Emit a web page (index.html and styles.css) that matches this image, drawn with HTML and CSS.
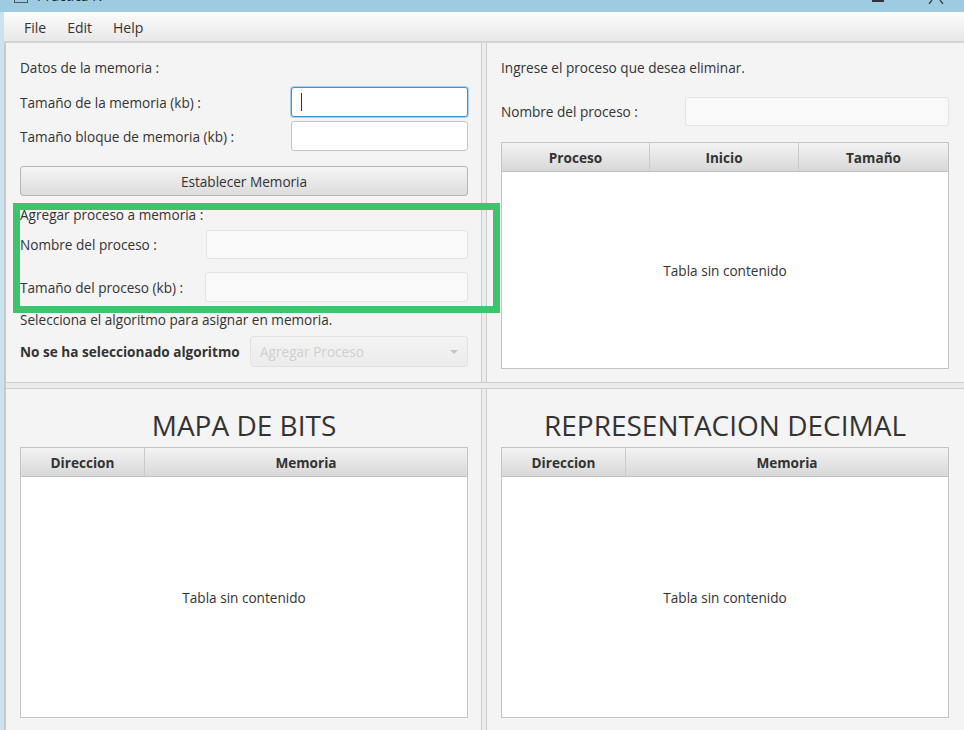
FILE: index.html
```html
<!DOCTYPE html>
<html lang="es">
<head>
<meta charset="utf-8">
<title>Practica</title>
<link rel="stylesheet" href="styles.css">
</head>
<body>
<div class="screen">
  <header class="titlebar">
    <span class="tb-icon"></span>
    <span class="tb-title">Practica IV</span>
    <span class="tb-fill"></span>
    <span class="tb-min"></span>
    <svg class="tb-close" width="16" height="4" viewBox="0 0 16 4"><path d="M4 0 L1 4 M12 0 L15 4" stroke="#444" stroke-width="1.4" fill="none"/></svg>
  </header>
  <div class="frame">
    <div class="edge"></div>
    <div class="win">
      <nav class="menubar">
        <span class="menu">File</span>
        <span class="menu">Edit</span>
        <span class="menu">Help</span>
      </nav>
      <main class="content">
        <div class="row row-top">
          <section class="panel panel-left panel-tl">
            <div class="line">Datos de la memoria :</div>
            <div class="frow r1">
              <span class="lbl">Tamaño de la memoria (kb) :</span>
              <div class="field focused w177"><span class="caret"></span></div>
            </div>
            <div class="frow r2">
              <span class="lbl">Tamaño bloque de memoria (kb) :</span>
              <div class="field w177"></div>
            </div>
            <div class="btn">Establecer Memoria</div>
            <div class="line l-agregar">Agregar proceso a memoria :</div>
            <div class="frow r3">
              <span class="lbl">Nombre del proceso :</span>
              <div class="field disabled w262"></div>
            </div>
            <div class="frow r4">
              <span class="lbl">Tamaño del proceso (kb) :</span>
              <div class="field disabled w263"></div>
            </div>
            <div class="line l-sel">Selecciona el algoritmo para asignar en memoria.</div>
            <div class="frow r5">
              <span class="lbl bold">No se ha seleccionado algoritmo</span>
              <div class="combo"><span class="combo-text">Agregar Proceso</span><span class="arrow"></span></div>
            </div>
          </section>
          <div class="vdiv"></div>
          <section class="panel panel-right panel-tr">
            <div class="line">Ingrese el proceso que desea eliminar.</div>
            <div class="frow r6">
              <span class="lbl">Nombre del proceso :</span>
              <div class="field disabled w264"></div>
            </div>
            <div class="table t-proc">
              <div class="thead">
                <div class="th c148">Proceso</div>
                <div class="th c149">Inicio</div>
                <div class="th cfill">Tamaño</div>
              </div>
              <div class="tbody">Tabla sin contenido</div>
            </div>
          </section>
        </div>
        <div class="hdiv"></div>
        <div class="row row-bottom">
          <section class="panel panel-left panel-bl">
            <h1 class="title">MAPA DE BITS</h1>
            <div class="table t-map">
              <div class="thead">
                <div class="th c124">Direccion</div>
                <div class="th cfill">Memoria</div>
              </div>
              <div class="tbody">Tabla sin contenido</div>
            </div>
          </section>
          <div class="vdiv"></div>
          <section class="panel panel-right panel-br">
            <h1 class="title">REPRESENTACION DECIMAL</h1>
            <div class="table t-map">
              <div class="thead">
                <div class="th c124">Direccion</div>
                <div class="th cfill">Memoria</div>
              </div>
              <div class="tbody">Tabla sin contenido</div>
            </div>
          </section>
        </div>
      </main>
    </div>
  </div>
  <div class="highlight"></div>
</div>
</body>
</html>
```

FILE: styles.css
```css
* { box-sizing: border-box; margin: 0; padding: 0; }
html, body { width: 964px; height: 730px; overflow: hidden; }
body {
  font-family: "Open Sans", "Noto Sans", sans-serif;
  font-size: 13.6px;
  color: #333;
  background: #f4f4f4;
  position: relative;
}
.screen { display: flex; flex-direction: column; height: 730px; }

/* title bar */
.titlebar {
  height: 12px; flex: none; background: #9ccbe2;
  display: flex; align-items: flex-end; overflow: hidden;
}
.tb-icon {
  width: 14px; height: 10px; margin-left: 14px; margin-bottom: 9px;
  border: 1px solid #555; border-top: none;
}
.tb-title { margin-left: 9px; margin-bottom: 8px; font-size: 14px; line-height: 16px; color: #222; }
.tb-fill { flex: 1; }
.tb-min { width: 12px; height: 2px; background: #333; margin-bottom: 10px; }
.tb-close { margin-left: 44px; margin-right: 20px; margin-bottom: 8px; }

/* frame */
.frame { flex: 1; display: flex; min-height: 0; }
.edge { width: 4px; flex: none; background: #cbe2f1; }
.win { flex: 1; display: flex; flex-direction: column; min-width: 0; }

.menubar {
  height: 31px; flex: none;
  border-bottom: 2px solid #d3d3d3;
  background: linear-gradient(#fbfbfb, #e8e8e8);
  display: flex; align-items: center;
  padding: 2px 0 0 20px; gap: 21px;
  font-size: 14px; color: #333;
}

.content {
  flex: 1; min-height: 0; display: flex; flex-direction: column;
  border-left: 2px solid #c9c9c9; background: #f4f4f4;
}
.row { display: flex; }
.row-top { height: 339px; flex: none; }
.row-bottom { flex: 1; min-height: 0; }
.hdiv {
  height: 7px; flex: none; background: #ececec;
  border-top: 1px solid #cdcdcd; border-bottom: 1px solid #cdcdcd;
}
.vdiv {
  width: 6px; flex: none; background: #ececec;
  border-left: 1px solid #cdcdcd; border-right: 1px solid #cdcdcd;
}

.panel { display: flex; flex-direction: column; min-width: 0; }
.panel-left { width: 475px; flex: none; padding: 0 13px 0 14px; }
.panel-right { flex: 1; padding: 0 15px 0 14px; }
.panel-tl, .panel-tr { padding-top: 16px; }
.panel-bl, .panel-br { padding-top: 19px; }

.line { height: 18px; line-height: 18px; white-space: nowrap; flex: none; }
.frow { display: flex; align-items: center; justify-content: space-between; flex: none; }
.lbl { white-space: nowrap; }
.bold { font-weight: 700; }

.r1 { margin-top: 10px; height: 30px; }
.r2 { margin-top: 4px; height: 30px; }
.btn {
  margin-top: 15px; height: 30px; flex: none;
  display: flex; align-items: center; justify-content: center;
  background: linear-gradient(#f5f5f5, #dcdcdc);
  border: 1px solid #b6b6b6; border-radius: 3px;
}
.l-agregar { margin-top: 10px; }
.r3 { margin-top: 6px; height: 29px; }
.r4 { margin-top: 13px; height: 30px; }
.l-sel { margin-top: 9px; }
.r5 { margin-top: 7px; height: 31px; }
.r6 { margin-top: 20px; height: 29px; }

.field {
  height: 100%; background: #fff;
  border: 1px solid #c6c6c6; border-radius: 3px;
  display: flex; align-items: center;
}
.field.focused { border: 1px solid #3c95d3; box-shadow: 0 0 0 1px #a8d0ec; }
.field.disabled { background: #f9f9f9; border-color: #e3e3e3; }
.w177 { width: 177px; }
.w262 { width: 262px; }
.w263 { width: 263px; }
.w264 { width: 264px; }
.caret { width: 1px; height: 18px; background: #333; margin-left: 9px; }

.combo {
  width: 218px; height: 100%;
  display: flex; align-items: center;
  background: linear-gradient(#f3f3f3, #ececec);
  border: 1px solid #e2e2e2; border-radius: 3px;
  padding: 0 9px 0 9px;
}
.combo-text { flex: 1; color: #cfcfcf; }
.arrow {
  width: 0; height: 0;
  border-left: 4px solid transparent; border-right: 4px solid transparent;
  border-top: 4px solid #c4c4c4;
}

/* tables */
.table {
  border: 1px solid #c4c4c4; background: #fff;
  display: flex; flex-direction: column; flex: none;
}
.t-proc { margin-top: 16px; height: 227px; }
.t-map { margin-top: 5px; height: 271px; }
.thead {
  height: 29px; flex: none; display: flex;
  background: linear-gradient(#f3f3f3, #d8d8d8);
  border-bottom: 1px solid #c0c0c0;
}
.th {
  display: flex; align-items: center; justify-content: center;
  font-weight: 700; border-right: 1px solid #cacaca;
}
.th:last-child { border-right: none; }
.c148 { width: 148px; }
.c149 { width: 149px; }
.c124 { width: 124px; }
.cfill { flex: 1; }
.tbody { flex: 1; display: flex; align-items: center; justify-content: center; }

.title {
  font-size: 28px; line-height: 34px; font-weight: 400;
  text-align: center; color: #333; white-space: nowrap; flex: none;
}

/* annotation overlay */
.highlight {
  position: absolute; left: 13px; top: 203px;
  width: 487px; height: 110px;
  border: 7px solid #3ec46d;
}
```
